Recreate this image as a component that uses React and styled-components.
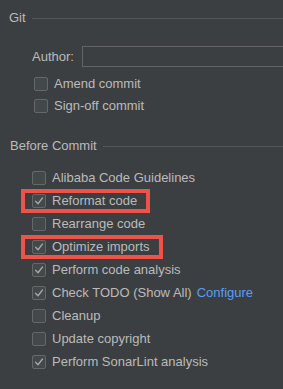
import styled, { createGlobalStyle } from "styled-components";

const GlobalStyle = createGlobalStyle`
    html, body {
        margin: 0;
        padding: 0;
        background: #3c3f41;
    }
    body {
        font-family: "Liberation Sans", Arial, sans-serif;
        font-size: 13px;
        color: #bbbbbb;
        overflow: hidden;
    }
`;

const gitOptions = [
    { label: "Amend commit", checked: false },
    { label: "Sign-off commit", checked: false },
];

const beforeCommitOptions = [
    { label: "Alibaba Code Guidelines", checked: false },
    { label: "Reformat code", checked: true, marked: true },
    { label: "Rearrange code", checked: false },
    { label: "Optimize imports", checked: true, marked: true },
    { label: "Perform code analysis", checked: true },
    { label: "Check TODO (Show All)", checked: true, link: "Configure" },
    { label: "Cleanup", checked: false },
    { label: "Update copyright", checked: false },
    { label: "Perform SonarLint analysis", checked: true },
];

const Checkbox = ({ checked }) => (
    <Box>
        {checked && (
            <svg width="14" height="14" viewBox="0 0 14 14">
                <path
                    d="M3.6 7.3 L6 9.7 L10.5 4"
                    fill="none"
                    stroke="#a4a4a4"
                    strokeWidth="1.4"
                    strokeLinecap="round"
                    strokeLinejoin="round"
                />
            </svg>
        )}
    </Box>
);

const Option = ({ label, checked, link, marked, variant }) => {
    const content = (
        <>
            <Checkbox checked={checked} />
            <Label>{label}</Label>
            {link && <Link>{link}</Link>}
        </>
    );
    return (
        <Row className={`row-${variant}`}>
            {marked ? <Highlight>{content}</Highlight> : content}
        </Row>
    );
};

const Section = ({ title, children, className }) => (
    <SectionWrap className={className}>
        <Header>
            <Title>{title}</Title>
            <Rule />
        </Header>
        {children}
    </SectionWrap>
);

const App = () => {
    return (
        <Panel>
            <GlobalStyle />
            <Section title="Git" className="section-git">
                <GitBody>
                    <AuthorRow>
                        <AuthorLabel>Author:</AuthorLabel>
                        <Field />
                    </AuthorRow>
                    <List>
                        {gitOptions.map((o) => (
                            <Option key={o.label} {...o} variant="git" />
                        ))}
                    </List>
                </GitBody>
            </Section>
            <Section title="Before Commit" className="section-before">
                <List className="before-list">
                    {beforeCommitOptions.map((o) => (
                        <Option key={o.label} {...o} variant="before" />
                    ))}
                </List>
            </Section>
        </Panel>
    );
};

const Panel = styled.div`
    width: 283px;
    height: 389px;
    box-sizing: border-box;
    padding: 10px 0 0 9px;
    overflow: hidden;
    background: #3c3f41;
`;

const SectionWrap = styled.section`
    display: flex;
    flex-direction: column;

    &.section-before {
        margin-top: 21px;
        padding-left: 1px;
    }
`;

const Header = styled.div`
    display: flex;
    align-items: center;
    gap: 6px;
    height: 16px;
`;

const Title = styled.span`
    line-height: 16px;
    color: #bbbbbb;
    white-space: nowrap;
`;

const Rule = styled.div`
    flex: 1;
    height: 1px;
    background: #555859;
`;

const GitBody = styled.div`
    display: flex;
    flex-direction: column;
    padding-left: 23px;
    margin-top: 20px;
`;

const AuthorRow = styled.div`
    display: flex;
    align-items: center;
    gap: 8px;
    height: 21px;
    margin-right: -30px;
    margin-bottom: 6px;
`;

const AuthorLabel = styled.span`
    line-height: 16px;
    white-space: nowrap;
`;

const Field = styled.div`
    flex: 1;
    height: 21px;
    box-sizing: border-box;
    border: 1px solid #646464;
    background: #3c3f41;
`;

const List = styled.div`
    display: flex;
    flex-direction: column;

    &.before-list {
        margin-top: 12px;
        padding-left: 22px;
    }
`;

const Row = styled.div`
    display: flex;
    align-items: center;

    &.row-git {
        height: 22px;
        padding-left: 2px;
    }

    &.row-before {
        height: 23px;
    }
`;

const Highlight = styled.div`
    display: flex;
    align-items: center;
    box-sizing: border-box;
    height: 24px;
    margin: 0 0 0 -11px;
    padding: 0 9px 0 7px;
    border: 4px solid #ee5349;
`;

const Box = styled.span`
    display: inline-flex;
    flex-shrink: 0;
    width: 14px;
    height: 14px;
    box-sizing: border-box;
    border: 1px solid #666868;
    border-radius: 2px;
    background: #43494a;
    align-items: center;
    justify-content: center;
    margin-right: 6px;

    svg {
        margin: -1px;
    }
`;

const Label = styled.span`
    line-height: 16px;
    white-space: nowrap;
    color: #bbbbbb;
`;

const Link = styled.span`
    margin-left: 5px;
    line-height: 16px;
    white-space: nowrap;
    color: #589df6;
`;

export default App;
